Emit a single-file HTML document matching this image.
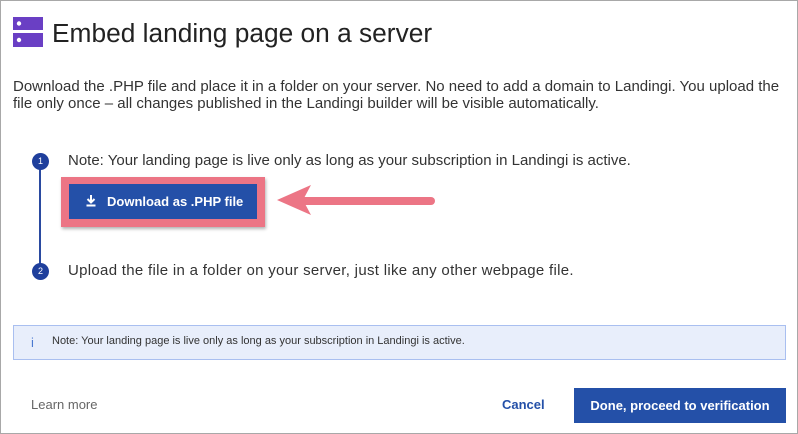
<!DOCTYPE html>
<html><head><meta charset="utf-8"><style>
*{margin:0;padding:0;box-sizing:border-box}
body{width:798px;height:434px;background:#fff;font-family:"Liberation Sans",sans-serif;color:#222;position:relative;overflow:hidden;border:1px solid #a8a8a8}
.a{position:absolute;white-space:nowrap}
</style></head><body>
<svg class="a" style="left:12px;top:16px" width="30" height="30" viewBox="0 0 30 30">
<rect x="0" y="0" width="30" height="13" fill="#6a3fc4"/><rect x="0" y="16" width="30" height="14" fill="#6a3fc4"/>
<circle cx="6" cy="6.5" r="2.2" fill="#fff"/><circle cx="6" cy="23" r="2.2" fill="#fff"/></svg>
<div class="a" style="left:51px;top:17px;font-size:26.3px;color:#222">Embed landing page on a server</div>
<div class="a" style="left:12px;top:77px;font-size:15px;line-height:17px;color:#333">Download the .PHP file and place it in a folder on your server. No need to add a domain to Landingi. You upload the<br>file only once – all changes published in the Landingi builder will be visible automatically.</div>
<div class="a" style="left:38px;top:162px;width:1.5px;height:108px;background:#2a4aa0"></div>
<div class="a" style="left:31px;top:152px;width:17px;height:17px;border-radius:50%;background:#1f3f9c;color:#fff;font-size:9px;text-align:center;line-height:17px">1</div>
<div class="a" style="left:31px;top:262px;width:17px;height:17px;border-radius:50%;background:#1f3f9c;color:#fff;font-size:9px;text-align:center;line-height:17px">2</div>
<div class="a" style="left:67px;top:151px;font-size:15px;color:#333">Note: Your landing page is live only as long as your subscription in Landingi is active.</div>
<div class="a" style="left:67px;top:261px;font-size:15px;letter-spacing:0.3px;color:#333">Upload the file in a folder on your server, just like any other webpage file.</div>
<div class="a" style="left:60px;top:176px;width:204px;height:50px;background:#ec7585;box-shadow:1px 2px 3px rgba(0,0,0,.3)"></div>
<div class="a" style="left:68px;top:183px;width:188px;height:35px;background:#2450a8;color:#fff;font-size:13px;font-weight:bold;line-height:35px;padding-left:38px">Download as .PHP file</div>
<svg class="a" style="left:84px;top:193px" width="12" height="13" viewBox="0 0 12 13"><path d="M6 1v7M2.5 5l3.5 3.5L9.5 5M1.5 11.5h9" stroke="#fff" stroke-width="2" fill="none"/></svg>
<svg class="a" style="left:272px;top:180px" width="165" height="40" viewBox="0 0 165 40"><path d="M158 20H20" stroke="#ec7585" stroke-width="8" stroke-linecap="round"/><path d="M4 19L38 4 30 19 38 34Z" fill="#ec7585"/></svg>
<div class="a" style="left:12px;top:324px;width:773px;height:35px;background:#e8eefb;border:1px solid #a9bff0"></div>
<div class="a" style="left:30px;top:334px;font-size:13px;color:#4a78d0">i</div>
<div class="a" style="left:51px;top:334px;font-size:11px;color:#333">Note: Your landing page is live only as long as your subscription in Landingi is active.</div>
<div class="a" style="left:30px;top:396px;font-size:13px;color:#666">Learn more</div>
<div class="a" style="left:501px;top:396px;font-size:13px;font-weight:bold;color:#2450a8">Cancel</div>
<div class="a" style="left:573px;top:387px;width:212px;height:35px;background:#2450a8;color:#fff;font-size:13px;font-weight:bold;text-align:center;line-height:35px">Done, proceed to verification</div>
</body></html>
